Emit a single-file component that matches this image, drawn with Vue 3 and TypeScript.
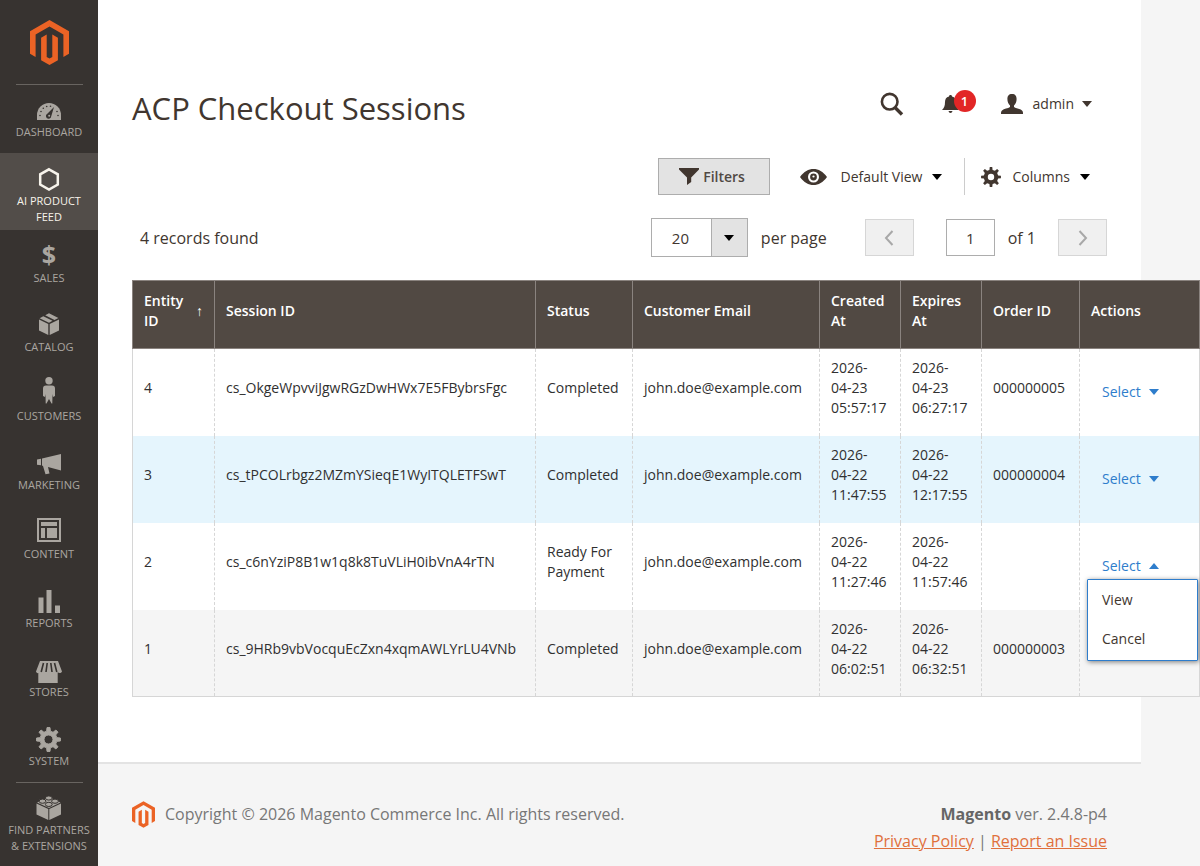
<script setup lang="ts">
import { ref } from 'vue'

interface NavItem { id: string; label: string; active?: boolean; divided?: boolean }
interface Stamp { year: string; day: string; time: string }
interface Session {
  id: number
  session: string
  status: string
  email: string
  created: Stamp
  expires: Stamp
  order: string
}

const nav: NavItem[] = [
  { id: 'dashboard', label: 'Dashboard', divided: true },
  { id: 'feed', label: 'AI Product Feed', active: true },
  { id: 'sales', label: 'Sales' },
  { id: 'catalog', label: 'Catalog' },
  { id: 'customers', label: 'Customers' },
  { id: 'marketing', label: 'Marketing' },
  { id: 'content', label: 'Content' },
  { id: 'reports', label: 'Reports' },
  { id: 'stores', label: 'Stores' },
  { id: 'system', label: 'System' },
  { id: 'partners', label: 'Find Partners & Extensions', divided: true },
]

function stamp(day: string, time: string): Stamp {
  return { year: '2026-', day, time }
}

const rows: Session[] = [
  { id: 4, session: 'cs_OkgeWpvviJgwRGzDwHWx7E5FBybrsFgc', status: 'Completed', email: 'john.doe@example.com', created: stamp('04-23', '05:57:17'), expires: stamp('04-23', '06:27:17'), order: '000000005' },
  { id: 3, session: 'cs_tPCOLrbgz2MZmYSieqE1WyITQLETFSwT', status: 'Completed', email: 'john.doe@example.com', created: stamp('04-22', '11:47:55'), expires: stamp('04-22', '12:17:55'), order: '000000004' },
  { id: 2, session: 'cs_c6nYziP8B1w1q8k8TuVLiH0ibVnA4rTN', status: 'Ready For Payment', email: 'john.doe@example.com', created: stamp('04-22', '11:27:46'), expires: stamp('04-22', '11:57:46'), order: '' },
  { id: 1, session: 'cs_9HRb9vbVocquEcZxn4xqmAWLYrLU4VNb', status: 'Completed', email: 'john.doe@example.com', created: stamp('04-22', '06:02:51'), expires: stamp('04-22', '06:32:51'), order: '000000003' },
]

const openRow = ref<number | null>(2)
const activeRow = ref(3)
const perPage = ref('20')
const page = ref('1')

function toggle(id: number) {
  openRow.value = openRow.value === id ? null : id
}

// The open menu lies over the action link of the row beneath it.
function isCovered(index: number): boolean {
  return index > 0 && rows[index - 1].id === openRow.value
}

function gear(cx: number, cy: number, outer: number, root: number, hole: number): string {
  const teeth = 8
  const step = (Math.PI * 2) / teeth
  const pts: string[] = []
  for (let i = 0; i < teeth; i++) {
    const a = i * step - Math.PI / 2
    const corners: [number, number][] = [[root, -0.28], [outer, -0.16], [outer, 0.16], [root, 0.28]]
    for (const [r, o] of corners) {
      pts.push(`${(cx + r * Math.cos(a + o * step)).toFixed(2)} ${(cy + r * Math.sin(a + o * step)).toFixed(2)}`)
    }
  }
  return `M${pts.join('L')}ZM${cx - hole} ${cy}a${hole} ${hole} 0 1 0 ${hole * 2} 0a${hole} ${hole} 0 1 0 ${-hole * 2} 0Z`
}

const systemGear = gear(13.5, 17.5, 12, 8.5, 4.5)
const columnsGear = gear(11, 11, 10, 7.3, 3.2)
const logoPath = 'M19.5 0 39 11.2V33.7L33.4 36.9V14.4L19.5 6.4 5.6 14.4V36.9L0 33.7V11.2ZM22.3 14.4V36.9L19.5 38.5 16.7 36.9V14.4L11.1 17.7V40.2L19.5 45 27.9 40.2V17.7Z'
</script>

<template>
  <div class="admin">
    <nav class="sidebar" aria-label="Main">
      <a class="logo" href="#" aria-label="Magento admin">
        <svg width="39" height="45" viewBox="0 0 39 45"><path :d="logoPath" /></svg>
      </a>
      <ul>
        <li v-for="item in nav" :key="item.id" :class="{ active: item.active, divided: item.divided }">
          <a href="#">
            <svg width="28" height="30" viewBox="0 0 28 30" fill="currentColor" aria-hidden="true">
              <g v-if="item.id === 'dashboard'">
                <path d="M2 27V22a12 12 0 0 1 24 0v5Z" />
                <path class="cut" d="m19 14-2.700 9a2.700 2.700 0 1 1-4-2.300Z" />
                <g class="cut">
                  <circle cx="5" cy="22.500" r="0.800" /><circle cx="6" cy="18.500" r="0.800" /><circle cx="8.300" cy="15.300" r="0.800" />
                  <circle cx="11.700" cy="13.500" r="0.800" /><circle cx="15.500" cy="13.200" r="0.800" /><circle cx="22" cy="18.500" r="0.800" /><circle cx="23" cy="22.500" r="0.800" />
                </g>
                <circle cx="14.200" cy="22.800" r="1" />
              </g>
              <path v-else-if="item.id === 'feed'" class="line" stroke-width="2.500" d="m14 7.300 8.800 5v10.200l-8.800 5-8.800-5V12.300Z" />
              <text v-else-if="item.id === 'sales'" class="dollar" x="14" y="25" text-anchor="middle">$</text>
              <g v-else-if="item.id === 'catalog'">
                <path d="M4 11.500 13.300 16v11L4 22.500ZM24 11.500 14.700 16v11L24 22.500ZM4.600 10.200 8.300 8.300 17.500 12.800 14 14.700ZM10.200 7.300 14 5.300 23.400 10.100 19.500 11.900Z" />
              </g>
              <g v-else-if="item.id === 'customers'">
                <circle cx="14" cy="3.800" r="3.700" />
                <path d="M11 8.500h6c2 0 3 1.200 3 3v7.500l-2 1-.5-3-.2 9.500h-.8l-2.500-4.500-2.500 4.500h-.8l-.2-9.500-.5 3-2-1v-7.500c0-1.800 1-3 3-3Z" />
              </g>
              <g v-else-if="item.id === 'marketing'">
                <path d="M2 13.500 6 12.800v6.500L2 18.700ZM7 12.500 26 8v16.500L13 21l1.500 6.500-4 .8L8 20l-1-.5Z" />
              </g>
              <path v-else-if="item.id === 'content'" fill-rule="evenodd" d="M2 3h24v24H2ZM4 5v20h20V5ZM6 7h16v4H6ZM6 13h4v10H6ZM12 13h10v10H12Z" />
              <path v-else-if="item.id === 'reports'" d="M3.500 13.500h5V29h-5ZM11.500 6h5v23h-5ZM20 21.500h5V29h-5Z" />
              <g v-else-if="item.id === 'stores'">
                <path d="M5 8h18l4 10.500c-1 2-3 2-4.300.8V30H3.300V19.300 20C2.500 20.500 1 19.500 1 18.500Z" />
                <path class="gap" d="M8.500 10 6.200 19M12.200 10 11 19M15.800 10 17 19M19.500 10 21.800 19" />
              </g>
              <path v-else-if="item.id === 'system'" class="rounded" fill-rule="evenodd" :d="systemGear" />
              <g v-else>
                <path d="M1.500 12.500 13.300 18v11L1.500 23.500ZM26 12.500 14.300 18v11L26 23.500ZM2 11.500 14 6l11.500 5.500L14 17Z" />
                <g class="stud">
                  <ellipse cx="13.800" cy="7" rx="3.400" ry="2.100" /><ellipse cx="7.500" cy="10.200" rx="3.400" ry="2.100" />
                  <ellipse cx="20" cy="10.200" rx="3.400" ry="2.100" /><ellipse cx="13.800" cy="13.400" rx="3.400" ry="2.100" />
                </g>
              </g>
            </svg>
            <span>{{ item.label }}</span>
          </a>
        </li>
      </ul>
    </nav>

    <div class="page">
      <main>
        <header>
          <h1>ACP Checkout Sessions</h1>
          <div class="tools">
            <button class="plain" aria-label="Search">
              <svg width="24" height="24" viewBox="0 0 24 24"><circle cx="9.700" cy="9.700" r="7.800" fill="none" stroke="currentColor" stroke-width="2.600" /><path d="m15 15.500 7 7" stroke="currentColor" stroke-width="3.400" /></svg>
            </button>
            <button class="plain bell" aria-label="Notifications">
              <svg width="17" height="20" viewBox="0 0 17 20"><path d="M8.500 1c1 0 1.500.6 1.500 1.500 3 .8 4 3 4 5.500 0 4 1 6 3 8H0c2-2 3-4 3-8 0-2.500 1-4.700 4-5.500C7 1.600 7.500 1 8.500 1ZM6.500 17h4c-.3 1.300-1 2-2 2s-1.700-.7-2-2Z" /></svg>
              <span class="badge">1</span>
            </button>
            <button class="plain account">
              <svg width="22" height="20" viewBox="0 0 22 20"><path d="M11 0c3.300 0 4.600 2 4.600 5 0 3-1 5-2.600 6.500V13c2 1.500 6 1.500 8 3.500 1 1 1 2 1 3.500H0c0-1.500 0-2.500 1-3.500 2-2 6-2 8-3.500v-1.500C7.400 10 6.400 8 6.400 5c0-3 1.300-5 4.600-5Z" /></svg>
              <span>admin</span>
              <i class="caret soft"></i>
            </button>
          </div>
        </header>

        <div class="controls">
          <button class="filters">
            <svg width="20" height="17" viewBox="0 0 20 17"><path d="M0 0h20v1.500L12.200 9.500V14L8 17V9.500L0 1.500Z" /></svg>
            <span>Filters</span>
          </button>
          <button class="plain view">
            <svg width="27" height="16" viewBox="0 0 27 16"><path fill-rule="evenodd" d="M0 8C4 2.500 8.500 0 13.500 0S23 2.500 27 8c-4 5.500-8.500 8-13.500 8S4 13.500 0 8ZM8 8a5.500 5.500 0 1 0 11 0A5.500 5.500 0 1 0 8 8Z" /><circle cx="13.500" cy="8" r="3.400" /><circle cx="13.500" cy="7.500" r="1.100" fill="#fff" /></svg>
            <span>Default View</span>
            <i class="caret"></i>
          </button>
          <button class="plain columns">
            <svg width="22" height="22" viewBox="0 0 22 22"><path fill-rule="evenodd" :d="columnsGear" /></svg>
            <span>Columns</span>
            <i class="caret"></i>
          </button>
        </div>

        <div class="pager">
          <p>4 records found</p>
          <div class="pager-tools">
            <div class="select">
              <select id="per-page" v-model="perPage">
                <option>20</option>
                <option>30</option>
                <option>50</option>
              </select>
              <span class="arrow"><i class="caret"></i></span>
            </div>
            <label for="per-page" class="per-page">per page</label>
            <button class="step" disabled aria-label="Previous page">
              <svg width="10" height="16" viewBox="0 0 10 16"><path d="M8.500 1 2 8l6.500 7" /></svg>
            </button>
            <input id="page" v-model="page" type="text">
            <label for="page" class="of">of 1</label>
            <button class="step" disabled aria-label="Next page">
              <svg width="10" height="16" viewBox="0 0 10 16"><path d="M1.500 1 8 8l-6.500 7" /></svg>
            </button>
          </div>
        </div>

        <table>
          <colgroup>
            <col class="c-id"><col><col class="c-status"><col class="c-email"><col class="c-created"><col class="c-expires"><col class="c-order"><col class="c-actions">
          </colgroup>
          <thead>
            <tr>
              <th><div class="sorted"><span>Entity ID</span><span class="sort">↑</span></div></th>
              <th>Session ID</th>
              <th>Status</th>
              <th>Customer Email</th>
              <th>Created At</th>
              <th>Expires At</th>
              <th>Order ID</th>
              <th>Actions</th>
            </tr>
          </thead>
          <tbody>
            <tr v-for="(r, index) in rows" :key="r.id" :class="{ hovered: r.id === activeRow }">
              <td>{{ r.id }}</td>
              <td>{{ r.session }}</td>
              <td>{{ r.status }}</td>
              <td>{{ r.email }}</td>
              <td>{{ r.created.year }}<span class="day">{{ r.created.day }}</span> {{ r.created.time }}</td>
              <td>{{ r.expires.year }}<span class="day">{{ r.expires.day }}</span> {{ r.expires.time }}</td>
              <td>{{ r.order }}</td>
              <td class="actions">
                <div class="menu-host">
                  <button class="select-link" :class="{ covered: isCovered(index) }" :aria-expanded="openRow === r.id" @click="toggle(r.id)">
                    Select <i class="caret" :class="{ up: openRow === r.id }"></i>
                  </button>
                  <ul v-if="openRow === r.id" class="menu">
                    <li><a href="#">View</a></li>
                    <li><a href="#">Cancel</a></li>
                  </ul>
                </div>
              </td>
            </tr>
          </tbody>
        </table>
      </main>

      <footer>
        <div class="copyright">
          <svg width="23" height="27" viewBox="0 0 39 45"><path :d="logoPath" /></svg>
          <span>Copyright © 2026 Magento Commerce Inc. All rights reserved.</span>
        </div>
        <div class="legal">
          <p><strong>Magento</strong> ver. 2.4.8-p4</p>
          <p><a href="#">Privacy Policy</a> | <a href="#">Report an Issue</a></p>
        </div>
      </footer>
    </div>
  </div>
</template>

<style>
body {
  background: #f5f5f5;
  overflow-x: hidden;
}
</style>

<style scoped>
* {
  box-sizing: border-box;
}
.admin {
  display: flex;
  min-height: 100vh;
  font: 14px/20px 'Open Sans', 'Noto Sans', sans-serif;
  color: #41362f;
}
button, input, select {
  font: inherit;
  color: inherit;
}
button {
  cursor: pointer;
}
ul {
  list-style: none;
  margin: 0;
  padding: 0;
}
p {
  margin: 0;
}
svg {
  display: block;
  flex: none;
  overflow: visible;
}

.sidebar {
  flex: none;
  width: 98px;
  background: #373330;
}
.logo {
  display: flex;
  justify-content: center;
  height: 84px;
  padding-top: 20px;
  fill: #eb6325;
}
.sidebar li {
  min-height: 69px;
  color: #aaa6a0;
}
.sidebar li.divided {
  background: linear-gradient(#686460, #686460) center top / 67px 1px no-repeat;
}
.sidebar li.active {
  background: #524d49;
  color: #f7f3eb;
  min-height: 77px;
}
.sidebar li a {
  display: flex;
  flex-direction: column;
  align-items: center;
  gap: 1px;
  padding: 9px 4px 5px;
  color: inherit;
  font-size: 11px;
  line-height: 16px;
  text-align: center;
  text-decoration: none;
  text-transform: uppercase;
}
.cut {
  fill: #373330;
}
.line {
  fill: none;
  stroke: currentColor;
}
.dollar {
  font-size: 25px;
  font-weight: 700;
}
.gap {
  stroke: #373330;
  stroke-width: 1.6;
}
.rounded {
  stroke: currentColor;
  stroke-width: 1;
  stroke-linejoin: round;
}
.stud {
  stroke: #373330;
  stroke-width: 1;
}

.page {
  flex: 1;
  min-width: 0;
  margin-right: 59px;
}
main {
  padding: 84px 34px 65px;
  background: #fff;
}
header {
  display: flex;
  justify-content: space-between;
  height: 50px;
}
h1 {
  margin: 0;
  font-size: 31px;
  line-height: 48px;
  font-weight: 400;
}
.tools {
  display: flex;
  align-items: center;
  height: 40px;
  padding-right: 15px;
}
.plain {
  display: flex;
  align-items: center;
  padding: 0;
  border: 0;
  background: none;
  fill: #41362f;
}
.bell {
  position: relative;
  margin: 0 42px 0 38px;
}
.badge {
  position: absolute;
  left: 12px;
  top: -4px;
  width: 22px;
  height: 22px;
  border-radius: 50%;
  background: #e22626;
  color: #fff;
  font-size: 13px;
  font-weight: 600;
  line-height: 22px;
}
.account {
  gap: 8px;
}
.account svg {
  margin-right: 2px;
}
.caret {
  flex: none;
  display: inline-block;
  border: 5px solid transparent;
  border-top: 6px solid #000;
  border-bottom: 0;
}
.caret.soft {
  border-top-color: #41362f;
}
.caret.up {
  border-top: 0;
  border-bottom: 6px solid #2e7dcc;
}

.controls {
  display: flex;
  justify-content: flex-end;
  height: 37px;
  margin-top: 24px;
}
.filters {
  display: flex;
  align-items: center;
  justify-content: center;
  gap: 4px;
  width: 112px;
  padding: 0 3px 0 0;
  border: 1px solid #adadad;
  background: #e3e3e3;
  color: #514943;
  fill: #41362f;
  font-weight: 600;
}
.view {
  margin-left: 30px;
  padding-right: 22px;
}
.view span {
  margin: 0 10px 0 14px;
}
.columns {
  padding: 0 17px 0 15px;
  border-left: 1px solid #ccc;
}
.columns span {
  margin: 0 10px;
}

.pager {
  display: flex;
  align-items: center;
  justify-content: space-between;
  height: 39px;
  margin-top: 23px;
  padding-left: 8px;
  font-size: 16px;
}
.pager-tools {
  display: flex;
  align-items: center;
}
.select {
  position: relative;
}
.select select {
  display: block;
  width: 97px;
  height: 39px;
  padding: 0 20px;
  border: 1px solid #adadad;
  border-radius: 0;
  background: #fff;
  font-size: 15px;
  appearance: none;
}
.arrow {
  position: absolute;
  top: 0;
  right: 0;
  display: flex;
  align-items: center;
  justify-content: center;
  width: 37px;
  height: 39px;
  border: 1px solid #adadad;
  background: #e3e3e3;
  pointer-events: none;
}
.per-page {
  margin: 0 38px 0 13px;
}
.step {
  display: flex;
  align-items: center;
  justify-content: center;
  width: 49px;
  height: 37px;
  padding: 0;
  border: 1px solid #d6d6d6;
  background: #f0f0f0;
}
.step path {
  fill: none;
  stroke: #a8a8a8;
  stroke-width: 2;
}
.pager-tools input {
  width: 49px;
  height: 37px;
  margin: 0 13px 0 32px;
  padding: 0;
  border: 1px solid #adadad;
  border-radius: 0;
  font-size: 15px;
  text-align: center;
}
.of {
  margin-right: 22px;
}

table {
  width: calc(100% + 93px);
  margin-top: 23px;
  border-collapse: collapse;
  table-layout: fixed;
  background: #fff;
  color: #303030;
}
.c-id { width: 82px; }
.c-status { width: 97px; }
.c-email { width: 187px; }
.c-created { width: 81px; }
.c-expires { width: 81px; }
.c-order { width: 98px; }
.c-actions { width: 120px; }
th {
  height: 67px;
  padding: 10px 11px 17px;
  border: 1px solid #8a837f;
  background: #514943;
  color: #fff;
  font-weight: 600;
  text-align: left;
}
.sorted {
  display: flex;
  align-items: center;
}
.sort {
  font-weight: 400;
}
td {
  height: 87px;
  padding: 9px 8px 17px 11px;
  border: 1px solid #d6d6d6;
  border-width: 0 1px;
  border-style: dashed;
}
td:first-child {
  border-left-style: solid;
}
td:last-child {
  border-right-style: solid;
}
.day {
  white-space: nowrap;
}
tbody {
  border-bottom: 1px solid #d6d6d6;
}
tbody tr:nth-child(even) {
  background: #f5f5f5;
}
tbody tr.hovered {
  background: #e5f5fd;
}
td.actions {
  padding: 0;
}
.menu-host {
  position: relative;
}
.select-link {
  display: flex;
  align-items: center;
  gap: 8px;
  padding: 3px 22px;
  border: 0;
  background: none;
  color: #2e7dcc;
}
.select-link.covered {
  visibility: hidden;
}
.select-link .caret:not(.up) {
  border-top-color: #2e7dcc;
}
.menu {
  position: absolute;
  top: 100%;
  left: 7px;
  right: 1px;
  z-index: 1;
  padding: 1px 0;
  border: 1px solid #2e7dcc;
  border-radius: 1px;
  background: #fff;
  box-shadow: 1px 1px 5px rgba(0, 0, 0, 0.5);
}
.menu a {
  display: block;
  padding: 9px 14px 10px;
  color: #41362f;
  text-decoration: none;
}

footer {
  display: flex;
  justify-content: space-between;
  align-items: flex-start;
  padding: 37px 34px 10px;
  border-top: 2px solid #e3e3e3;
  color: #777;
  font-size: 16px;
  line-height: 27px;
}
.copyright {
  display: flex;
  align-items: center;
  gap: 10px;
  fill: #eb6325;
}
.legal {
  text-align: right;
}
.legal strong {
  color: #666;
  font-weight: 700;
}
.legal a {
  color: #e0703c;
}
</style>
